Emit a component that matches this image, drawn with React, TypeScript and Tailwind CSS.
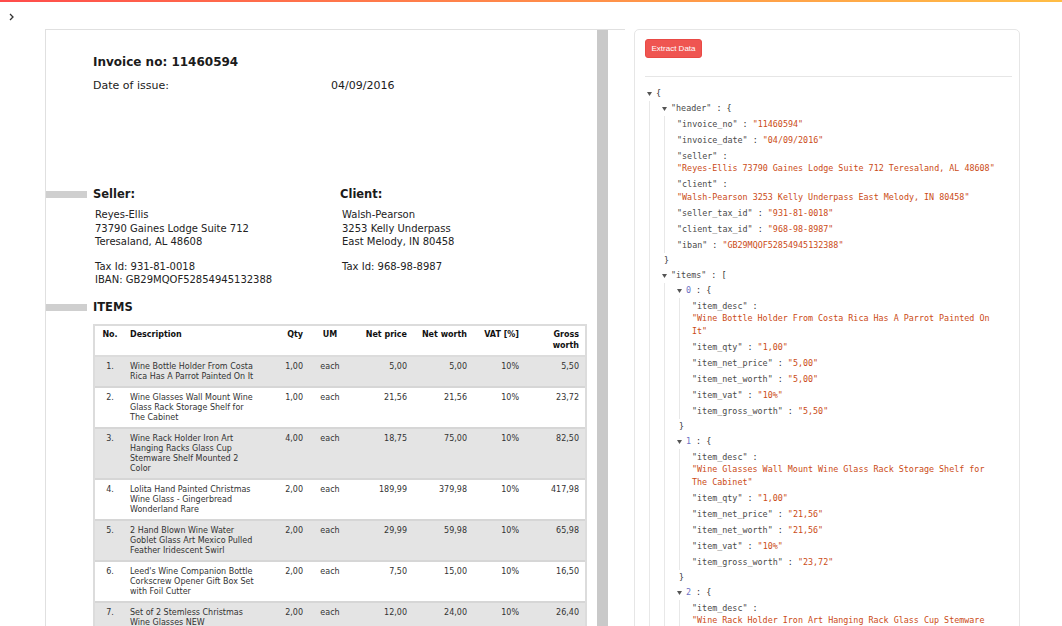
import React from "react";

type Row = { no: string; desc: string; qty: string; price: string; worth: string; gross: string };

const rows: Row[] = [
  { no: "1.", desc: "Wine Bottle Holder From Costa Rica Has A Parrot Painted On It", qty: "1,00", price: "5,00", worth: "5,00", gross: "5,50" },
  { no: "2.", desc: "Wine Glasses Wall Mount Wine Glass Rack Storage Shelf for The Cabinet", qty: "1,00", price: "21,56", worth: "21,56", gross: "23,72" },
  { no: "3.", desc: "Wine Rack Holder Iron Art Hanging Racks Glass Cup Stemware Shelf Mounted 2 Color", qty: "4,00", price: "18,75", worth: "75,00", gross: "82,50" },
  { no: "4.", desc: "Lolita Hand Painted Christmas Wine Glass - Gingerbread Wonderland Rare", qty: "2,00", price: "189,99", worth: "379,98", gross: "417,98" },
  { no: "5.", desc: "2 Hand Blown Wine Water Goblet Glass Art Mexico Pulled Feather Iridescent Swirl", qty: "2,00", price: "29,99", worth: "59,98", gross: "65,98" },
  { no: "6.", desc: "Leed's Wine Companion Bottle Corkscrew Opener Gift Box Set with Foil Cutter", qty: "2,00", price: "7,50", worth: "15,00", gross: "16,50" },
  { no: "7.", desc: "Set of 2 Stemless Christmas Wine Glasses NEW", qty: "2,00", price: "12,00", worth: "24,00", gross: "26,40" },
];

type J = string | J[] | { [k: string]: J };

const data: J = {
  header: {
    invoice_no: "11460594",
    invoice_date: "04/09/2016",
    seller: "Reyes-Ellis 73790 Gaines Lodge Suite 712 Teresaland, AL 48608",
    client: "Walsh-Pearson 3253 Kelly Underpass East Melody, IN 80458",
    seller_tax_id: "931-81-0018",
    client_tax_id: "968-98-8987",
    iban: "GB29MQOF52854945132388",
  },
  items: [
    { item_desc: "Wine Bottle Holder From Costa Rica Has A Parrot Painted On It", item_qty: "1,00", item_net_price: "5,00", item_net_worth: "5,00", item_vat: "10%", item_gross_worth: "5,50" },
    { item_desc: "Wine Glasses Wall Mount Wine Glass Rack Storage Shelf for The Cabinet", item_qty: "1,00", item_net_price: "21,56", item_net_worth: "21,56", item_vat: "10%", item_gross_worth: "23,72" },
    { item_desc: "Wine Rack Holder Iron Art Hanging Rack Glass Cup Stemware Shelf Mounted 2 Color", item_qty: "4,00", item_net_price: "18,75", item_net_worth: "75,00", item_vat: "10%", item_gross_worth: "82,50" },
  ],
};

const cols = "grid grid-cols-[30px_145px_40px_40px_64px_60px_52px_59px]";

const Bar = () => <div className="h-[7px] w-[41px] shrink-0 bg-[#cfcfcf]" />;

function Tri() {
  return (
    <svg width="5" height="4" viewBox="0 0 5 4" className="mr-[4px] shrink-0">
      <path d="M0 0H5L2.5 4Z" fill="#555" />
    </svg>
  );
}

function Node({ name, value, isIndex }: { name?: string; value: J; isIndex?: boolean }) {
  const keyEl =
    name === undefined ? null : (
      <>
        {isIndex ? <span className="text-[#6c71c4]">{name}</span> : <span className="text-[#4a4a4a]">"{name}"</span>}
        <span className="text-[#333]"> : </span>
      </>
    );
  if (typeof value === "string") {
    return (
      <div className="py-[1.75px] leading-[12.5px]">
        {keyEl}
        <span className="inline-block text-[#cb4b16]">"{value}"</span>
      </div>
    );
  }
  const isArr = Array.isArray(value);
  const entries: [string, J][] = isArr ? (value as J[]).map((v, i) => [String(i), v]) : Object.entries(value);
  return (
    <div>
      <div className="flex h-[15px] items-center leading-[12.5px] whitespace-pre">
        <Tri />
        {keyEl}
        <span className="text-[#333]">{isArr ? "[" : "{"}</span>
      </div>
      <div className="ml-[2px] border-l border-[#e8e8e8] pl-[12px]">
        {entries.map(([k, v]) => (
          <Node key={k} name={k} value={v} isIndex={isArr} />
        ))}
      </div>
      <div className="ml-[2px] flex h-[15px] items-center leading-[12.5px] text-[#333]">{isArr ? "]" : "}"}</div>
    </div>
  );
}

function Invoice() {
  return (
    <div className="h-full w-[551px] shrink-0 bg-white font-['DejaVu_Sans',sans-serif] text-[#1b1b1b]">
      <div className="pl-[47px] pt-[25px]">
        <div className="text-[12px] leading-[14px] font-bold">Invoice no: 11460594</div>
        <div className="mt-[10px] flex text-[11px] leading-[14px]">
          <div className="w-[238px]">Date of issue:</div>
          <div>04/09/2016</div>
        </div>
      </div>

      <div className="mt-[94px] flex">
        <div className="flex h-[14px] items-center">
          <Bar />
        </div>
        <div className="ml-[6px] w-[247px]">
          <div className="text-[11.5px] leading-[14px] font-bold">Seller:</div>
          <div className="mt-[7px] pl-[2px] text-[10px] text-[#222]">
            <div className="leading-[13.5px]">
              <div>Reyes-Ellis</div>
              <div>73790 Gaines Lodge Suite 712</div>
              <div>Teresaland, AL 48608</div>
            </div>
            <div className="mt-[12.5px] leading-[12.5px]">
              <div>Tax Id: 931-81-0018</div>
              <div>IBAN: GB29MQOF52854945132388</div>
            </div>
          </div>
        </div>
        <div>
          <div className="text-[11.5px] leading-[14px] font-bold">Client:</div>
          <div className="mt-[7px] pl-[2px] text-[10px] text-[#222]">
            <div className="leading-[13.5px]">
              <div>Walsh-Pearson</div>
              <div>3253 Kelly Underpass</div>
              <div>East Melody, IN 80458</div>
            </div>
            <div className="mt-[12.5px] leading-[12.5px]">
              <div>Tax Id: 968-98-8987</div>
            </div>
          </div>
        </div>
      </div>

      <div className="mt-[14px] flex items-center">
        <Bar />
        <div className="ml-[6px] text-[11.5px] leading-[14px] font-bold">ITEMS</div>
      </div>

      <div className="mt-[10px] ml-[47px] w-[494px] border-x-2 border-t-2 border-[#dcdcdc] text-[8px]">
        <div className={`${cols} border-b-2 border-[#dcdcdc] bg-white pt-[4px] pb-[4px] leading-[10.5px] font-bold text-[#111]`}>
          <div className="text-center">No.</div>
          <div className="pl-[5px]">Description</div>
          <div className="pr-[7px] text-right">Qty</div>
          <div className="text-center">UM</div>
          <div className="pr-[7px] text-right">Net price</div>
          <div className="pr-[7px] text-right">Net worth</div>
          <div className="pr-[7px] text-right">VAT [%]</div>
          <div className="pl-[4px] pr-[6px] text-right">Gross worth</div>
        </div>
        {rows.map((r, i) => (
          <div
            key={r.no}
            className={`${cols} border-b-2 border-[#d6d6d6] pt-[5px] pb-[4px] leading-[10px] text-[#333] ${i % 2 === 0 ? "bg-[#e4e4e4]" : "bg-white"}`}
          >
            <div className="text-center">{r.no}</div>
            <div className="pr-[13px] pl-[5px]">{r.desc}</div>
            <div className="pr-[7px] text-right">{r.qty}</div>
            <div className="text-center">each</div>
            <div className="pr-[7px] text-right">{r.price}</div>
            <div className="pr-[7px] text-right">{r.worth}</div>
            <div className="pr-[7px] text-right">10%</div>
            <div className="pr-[6px] text-right">{r.gross}</div>
          </div>
        ))}
      </div>
    </div>
  );
}

export default function App() {
  return (
    <div className="h-[626px] w-[1062px] overflow-hidden bg-white">
      <div className="h-[2px] bg-linear-to-r from-[#ff4b4b] to-[#ffbd45]" />
      <div className="h-[27px] pt-[11px] pl-[8px]">
        <svg width="7" height="8" viewBox="0 0 7 8">
          <path d="M2 1L5 4L2 7" fill="none" stroke="#333" strokeWidth="1.3" />
        </svg>
      </div>
      <div className="flex pl-[45px]">
        <div className="flex h-[597px] w-[580px] border-t border-l border-[#e0e0e0]">
          <Invoice />
          <div className="h-full w-[11px] bg-[#c9c9c9]" />
        </div>
        <div className="ml-[9px] h-[620px] w-[386px] rounded-[5px] border border-[#e6e6e6] pt-[9px] pr-[7px] pl-[10px]">
          <button className="flex h-[19px] w-[57px] items-center justify-center rounded-[3px] border border-[#e94a45] bg-[#ef5551] font-['Liberation_Sans',sans-serif] text-[8px] text-white">
            Extract Data
          </button>
          <div className="mt-[18px] h-px bg-[#e6e6e6]" />
          <div className="mt-[9px] mr-[9px] ml-[2px] font-['DejaVu_Sans_Mono',monospace] text-[8.4px]">
            <Node value={data} />
          </div>
        </div>
      </div>
    </div>
  );
}
